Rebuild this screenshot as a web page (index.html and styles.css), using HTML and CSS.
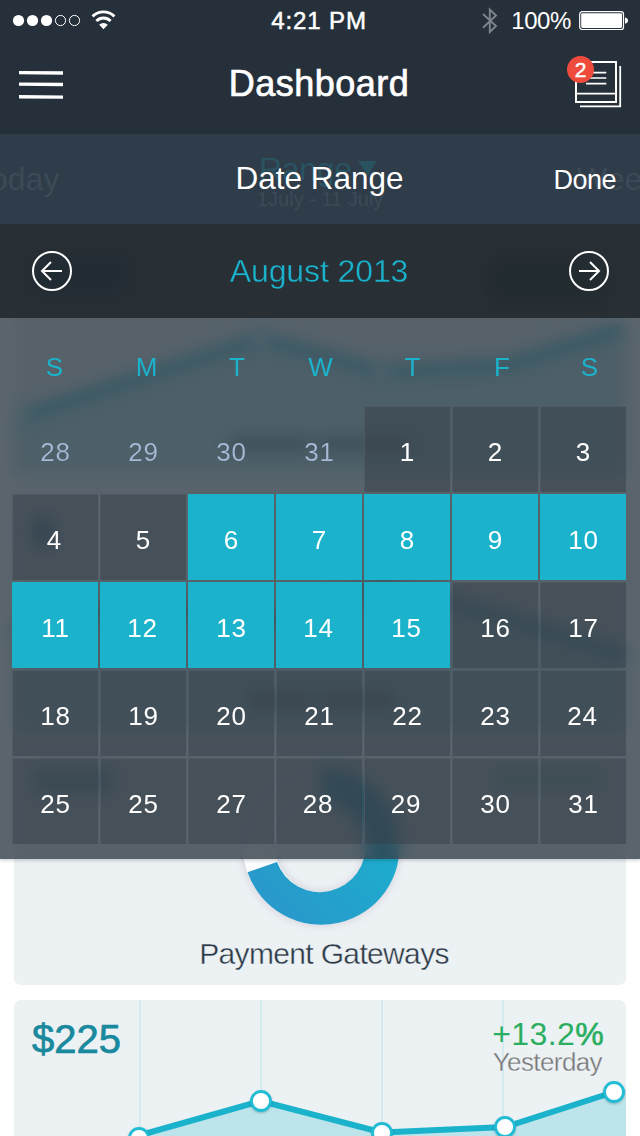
FILE: index.html
```html
<!DOCTYPE html>
<html lang="en">
<head>
<meta charset="utf-8">
<title>Dashboard</title>
<link rel="stylesheet" href="styles.css">
</head>
<body>
<div class="screen">
  <header class="header">
    <div class="status">
      <svg class="signal" width="104" height="24" viewBox="0 0 104 24">
        <g fill="#fff"><circle cx="6.5" cy="12.5" r="5.6"/><circle cx="20.5" cy="12.5" r="5.6"/><circle cx="34.5" cy="12.5" r="5.6"/></g>
        <g fill="none" stroke="#fff" stroke-width="1"><circle cx="48.5" cy="12.5" r="5.1"/><circle cx="62.5" cy="12.5" r="5.1"/></g>
        <g fill="none" stroke="#fff" stroke-width="2.9"><path d="M80.6 8.4A15.5 15.5 0 0 1 102.4 8.4"/><path d="M84.4 12.9A10 10 0 0 1 98.6 12.9"/></g>
        <path d="M87.2 16.8A6 6 0 0 1 95.8 16.8L91.5 21.3Z" fill="#fff"/>
      </svg>
      <span class="clock">4:21 PM</span>
      <div class="power">
        <svg width="16" height="28" viewBox="0 0 16 28" fill="none" stroke="#7d848b" stroke-width="1.9"><path d="M1 7L14 19L7.8 25V2.5L14 8.5L1 20.8"/></svg>
        <span class="percent">100%</span>
        <svg class="battery" width="50" height="20" viewBox="0 0 50 20"><rect x=".7" y=".7" width="43.8" height="17.8" rx="2.6" fill="none" stroke="#fff" stroke-width="1.2"/><rect x="2.2" y="2.2" width="40.8" height="14.8" rx="1.4" fill="#fff"/><path d="M46 6.4Q49 7 49 9.6Q49 12.2 46 12.8Z" fill="#fff"/></svg>
      </div>
    </div>
    <div class="nav">
      <svg class="menu" width="44" height="30" viewBox="0 0 44 30" fill="#fff"><path d="M0 .9L44 1.3V4.7L0 4.3ZM0 12.4L44 12.8V16.2L0 15.8ZM0 25L44 25.4V28.8L0 28.4Z"/></svg>
      <h1 class="title">Dashboard</h1>
      <div class="docs">
        <svg width="56" height="52" viewBox="0 0 56 52" fill="none" stroke="#fff" stroke-width="2"><rect x="9" y="6" width="40" height="40"/><path d="M8 37.7H49" stroke-width="1.8"/><path d="M53.2 10V50.3H13" stroke-width="1.8"/><path d="M19 16.6H39.3M19 22H39.3M19 27.6H39.3" stroke-width="1.7"/></svg>
        <span class="badge">2</span>
      </div>
    </div>
  </header>

  <div class="tabs">
    <span class="tab tab-prev">Today</span>
    <div class="tab-current">
      <span class="tab-range">Range <svg width="20" height="16" viewBox="0 0 20 16"><path d="M0 0H19L9.5 15Z" fill="#2a5362"/></svg></span>
      <span class="tab-dates">1July - 11 July</span>
    </div>
    <span class="tab tab-next">Week</span>
  </div>

  <main class="cards">
    <section class="card">
      <svg class="plot" width="612" height="240" viewBox="0 0 612 240">
        <path d="M0 185L12 178L247 103L368 136L491 130L612 92V240H0Z" fill="#bce4ea"/>
        <path d="M4 182L247 103L368 136L491 130L608 94" fill="none" stroke="#1bb3cc" stroke-width="9"/>
        <circle cx="6" cy="181" r="9" fill="#fff" stroke="#22bdd5" stroke-width="3"/><circle cx="247" cy="103" r="9" fill="#fff" stroke="#22bdd5" stroke-width="3"/><circle cx="368" cy="136" r="9" fill="#fff" stroke="#22bdd5" stroke-width="3"/>
        <g fill="#74909c"><rect x="215" y="202" width="82" height="14"/><rect x="304" y="202" width="95" height="14"/></g>
        <rect x="20" y="24" width="92" height="30" fill="#19899d"/><rect x="478" y="24" width="112" height="44" fill="#5b9a7b"/>
      </svg>
    </section>
    <section class="card">
      <svg class="plot" width="612" height="240" viewBox="0 0 612 240">
        <path d="M0 140L125 112L247 132L368 93L491 127L612 164V240H0Z" fill="#bce4ea"/>
        <path d="M0 140L125 112L247 132L368 93L491 127L612 164" fill="none" stroke="#1b92b5" stroke-width="9"/>
        <rect x="20" y="28" width="18" height="28" fill="#2f7d90"/>
        <g fill="#627c8a"><rect x="234" y="204" width="64" height="13"/><rect x="306" y="204" width="74" height="13"/></g>
      </svg>
    </section>
    <section class="card card-gateways">
      <svg class="donut" width="170" height="180" viewBox="236 758 170 180">
        <defs><linearGradient id="ring" x1="1" y1="0" x2="0" y2="1"><stop offset=".35" stop-color="#1eabcd"/><stop offset="1" stop-color="#2b94ca"/></linearGradient></defs>
        <circle class="donut-track" cx="321" cy="846.5" r="61.8" fill="none" stroke="#fbfcfd" stroke-width="32.6"/>
        <path d="M321 768.4A78.2 78.2 0 1 1 247.5 872.3L277 862.1A45.6 45.6 0 1 0 321 801Z" fill="url(#ring)"/>
      </svg>
      <h2 class="card-name">Payment Gateways</h2>
      <div class="value-chip"></div><div class="delta-chip"></div>
    </section>
    <section class="card card-sales">
      <svg class="plot" width="612" height="136" viewBox="14 1000 612 136">
        <g stroke="#d4eaee" stroke-width="2"><path d="M140 1000V1136M261 1000V1136M382 1000V1136M503 1000V1136"/></g>
        <path d="M139 1138L261 1101L382 1132.5L505 1127L614 1092L626 1089V1136H139Z" fill="#bce4ea"/>
        <path d="M139 1135.5L261 1101L382 1132.5L505 1127L614 1092" fill="none" stroke="#1bb3cc" stroke-width="6"/>
        <g class="knobs" fill="#fff" stroke="#22bdd5" stroke-width="2.8"><circle cx="139" cy="1138" r="9.5"/><circle cx="261" cy="1101" r="9.5"/><circle cx="382" cy="1133" r="9.5"/><circle cx="505" cy="1127" r="9.5"/><circle cx="614" cy="1092" r="9.5"/></g>
      </svg>
      <div class="summary">
        <span class="amount">$225</span>
        <div class="change"><span class="delta">+13.2<b>%</b></span><span class="since">Yesterday</span></div>
      </div>
    </section>
  </main>

  <div class="sheet">
    <div class="sheet-head"><span class="sheet-title">Date Range</span><span class="done">Done</span></div>
    <div class="month">
      <svg width="40" height="40" viewBox="0 0 40 40" fill="none" stroke="#fff" stroke-width="2"><circle cx="20" cy="20" r="19"/><path d="M30 20H10M19 11L10 20L19 29"/></svg>
      <span class="month-name">August 2013</span>
      <svg width="40" height="40" viewBox="0 0 40 40" fill="none" stroke="#fff" stroke-width="2"><circle cx="20" cy="20" r="19"/><path d="M10 20H30M21 11L30 20L21 29"/></svg>
    </div>
    <div class="calendar">
      <div class="weekdays"><span>S</span><span>M</span><span>T</span><span>W</span><span>T</span><span>F</span><span>S</span></div>
      <div class="days">
        <span class="day out">28</span><span class="day out">29</span><span class="day out">30</span><span class="day out">31</span><span class="day">1</span><span class="day">2</span><span class="day">3</span>
        <span class="day back">4</span><span class="day">5</span><span class="day on">6</span><span class="day on">7</span><span class="day on">8</span><span class="day on">9</span><span class="day on">10</span>
        <span class="day on">11</span><span class="day on back">12</span><span class="day on">13</span><span class="day on back">14</span><span class="day on back">15</span><span class="day">16</span><span class="day">17</span>
        <span class="day">18</span><span class="day">19</span><span class="day">20</span><span class="day">21</span><span class="day">22</span><span class="day">23</span><span class="day back">24</span>
        <span class="day">25</span><span class="day">25</span><span class="day">27</span><span class="day far">28</span><span class="day far">29</span><span class="day">30</span><span class="day">31</span>
      </div>
    </div>
  </div>
</div>
</body>
</html>
```
FILE: styles.css
```css
* { box-sizing: border-box; }
body { margin: 0; background: #fff; font-family: "Liberation Sans", Arial, sans-serif; }
svg { display: block; flex: none; }
.screen { position: relative; width: 640px; height: 1136px; overflow: hidden; background: #fff; }

.header { height: 134px; background: #26303a; color: #fff; }
.status { display: grid; grid-template-columns: 1fr auto 1fr; align-items: center; height: 40px; padding: 0 11px 0 12px; }
.clock { font-size: 24px; line-height: 28px; letter-spacing: .9px; -webkit-text-stroke: .5px #fff; padding: 1px 3px 0 0; }
.power { display: flex; align-items: center; justify-content: flex-end; padding-top: 1px; }
.percent { font-size: 24px; line-height: 28px; letter-spacing: -.4px; margin: 1px 8px 0 13px; }
.nav { display: grid; grid-template-columns: 1fr auto 1fr; align-items: center; height: 88px; padding: 0 17px 0 19px; }
.menu { margin-top: 2px; }
.title { margin: 0; padding-right: 4px; font-size: 36px; line-height: 44px; font-weight: 400; letter-spacing: .5px; -webkit-text-stroke: .7px #fff; }
.docs { position: relative; justify-self: end; width: 56px; height: 52px; margin-top: -4px; }
.badge { position: absolute; left: 0; top: 0; width: 27px; height: 27px; border-radius: 50%; background: #ef4b3c; font-size: 21px; line-height: 27px; text-align: center; -webkit-text-stroke: .5px #fff; }

.tabs { display: grid; grid-template-columns: minmax(0, 1fr) 140px minmax(0, 1fr); height: 90px; overflow: hidden; background: #2f3c49; white-space: nowrap; }
.tab { font-size: 32px; line-height: 36px; padding-top: 27px; color: #3c4a57; }
.tab-prev { margin-left: -26px; }
.tab-next { padding-left: 187px; }
.tab-current { display: flex; flex-direction: column; padding: 16px 0 0 7px; }
.tab-range { display: flex; align-items: center; gap: 6px; font-size: 32px; line-height: 38px; padding-left: 2px; color: #2a5362; letter-spacing: -.3px; }
.tab-dates { font-size: 20px; line-height: 22px; color: #3c4a57; }

.cards { display: flex; flex-direction: column; gap: 15px; padding: 11px 14px 0; }
.card { position: relative; height: 240px; flex: none; overflow: hidden; border-radius: 7px; background: #ecf1f4; }
.card-gateways { display: flex; flex-direction: column; align-items: center; padding-top: 13px; }
.donut { margin-right: -2px; }
.donut-track { filter: drop-shadow(0 0 4px rgba(100, 70, 120, .22)); }
.card-name { margin: -2px 0 0 8px; font-size: 30px; line-height: 36px; font-weight: 400; letter-spacing: -.65px; color: #2b3846; -webkit-text-stroke: .4px #ecf1f4; white-space: nowrap; }
.value-chip { position: absolute; left: 20px; top: 24px; width: 80px; height: 24px; background: #7fafbd; }
.delta-chip { position: absolute; left: 480px; top: 24px; width: 108px; height: 20px; background: #a9d3bf; }
.card-sales { height: 136px; border-radius: 7px 7px 0 0; }
.card-sales .plot { position: absolute; left: 0; top: 0; }
.knobs { filter: drop-shadow(0 1px 1px rgba(0, 60, 80, .3)); }
.summary { position: relative; display: flex; justify-content: space-between; padding: 16px 22px 0 18px; }
.amount { font-size: 40px; line-height: 46px; color: #19899d; -webkit-text-stroke: .7px #19899d; }
.change { display: flex; flex-direction: column; align-items: flex-end; }
.delta { font-size: 32px; line-height: 36px; color: #29ae60; letter-spacing: .4px; }
.delta b { font-weight: 400; -webkit-text-stroke: .6px #29ae60; }
.since { font-size: 26px; line-height: 30px; margin: -5px 2px 0 0; letter-spacing: -.6px; color: #777; -webkit-text-stroke: .35px #ecf1f4; }

.sheet { position: absolute; left: 0; top: 134px; width: 640px; color: #fff; box-shadow: 0 2px 3px rgba(0, 0, 0, .15); }
.sheet-head { display: grid; grid-template-columns: 1fr auto 1fr; align-items: center; height: 90px; padding: 0 24px 0 23px; }
.sheet-title { grid-column: 2; font-size: 31.5px; line-height: 36px; padding-bottom: 2px; }
.done { justify-self: end; font-size: 27px; line-height: 32px; letter-spacing: -.5px; padding-top: 2px; }
.month { display: flex; align-items: center; justify-content: space-between; height: 94px; padding: 0 31px 0 32px; background: rgba(31, 38, 45, .96); backdrop-filter: blur(10px); }
.month-name { font-size: 32px; line-height: 38px; color: #1bb3cc; letter-spacing: -.1px; -webkit-text-stroke: .35px #272e35; padding-right: 3px; }
.calendar { height: 541px; padding: 34px 0 0 12px; background: rgba(49, 61, 71, .8); backdrop-filter: blur(8px); }
.weekdays { display: grid; grid-template-columns: 85px 99px 82px 85px 99px 80px 95px; height: 54px; color: #1bb3cc; font-size: 26px; line-height: 30px; text-align: center; }
.days { display: grid; grid-template-columns: repeat(7, 86px); grid-auto-rows: 86px; gap: 2px; }
.day { padding: 31px 0 0 1px; font-size: 26px; line-height: 30px; letter-spacing: .8px; text-align: center; background: rgba(54, 64, 73, .5); box-shadow: inset 1px 1px 0 rgba(86, 97, 106, .6); }
.day.out { color: #a7bbd6; background: none; box-shadow: none; -webkit-text-stroke: .2px #4d5e69; }
.day.on { background: #1bb3cc; box-shadow: none; }
.day.back { padding: 31px 1px 0 0; }
.day.far { padding: 31px 2px 0 0; }
```
